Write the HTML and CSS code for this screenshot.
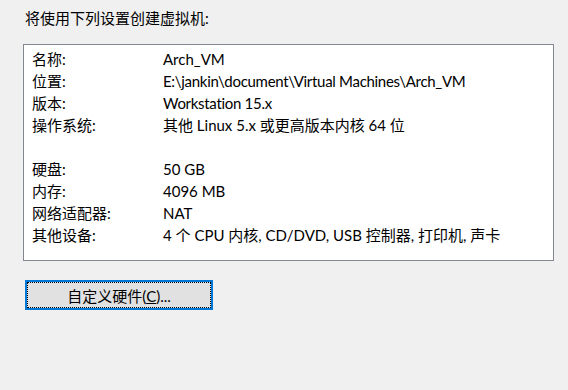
FILE: index.html
```html
<!doctype html>
<html lang="zh-CN">
  <head>
    <meta charset="utf-8">
    <title>新建虚拟机向导</title>
    <link rel="stylesheet" href="styles.css">
  </head>
  <body>
    <div class="page">
      <p class="intro">将使用下列设置创建虚拟机:</p>

      <div class="summary">
        <div class="row"><span class="key">名称:</span><span class="val">Arch_VM</span></div>
        <div class="row"><span class="key">位置:</span><span class="val tight">E:\jankin\document\Virtual Machines\Arch_VM</span></div>
        <div class="row"><span class="key">版本:</span><span class="val tight">Workstation 15.x</span></div>
        <div class="row"><span class="key">操作系统:</span><span class="val">其他 Linux 5.x 或更高版本内核 64 位</span></div>
        <div class="row blank"></div>
        <div class="row"><span class="key">硬盘:</span><span class="val">50 GB</span></div>
        <div class="row"><span class="key">内存:</span><span class="val">4096 MB</span></div>
        <div class="row"><span class="key">网络适配器:</span><span class="val">NAT</span></div>
        <div class="row"><span class="key">其他设备:</span><span class="val">4 个 CPU 内核, CD/DVD, USB 控制器, 打印机, 声卡</span></div>
      </div>

      <button class="btn" type="button">自定义硬件(<u>C</u>)...</button>
    </div>
  </body>
</html>
```

FILE: styles.css
```css
body {
  margin: 0;
  background: #f0f0f0;
  color: #000;
  font-family: Lato, "Noto Sans CJK SC", sans-serif;
  font-size: 15px;
}

.page {
  padding: 7px 15px 0 23px;
}

.intro {
  margin: 0 0 15px 2px;
  line-height: 22px;
}

.summary {
  width: 529px;
  background: #fff;
  border: 1px solid #828790;
  padding: 3px 0 14px 0;
}

.row {
  display: flex;
  height: 22px;
  line-height: 22px;
  padding-left: 8px;
  white-space: nowrap;
}

.key {
  width: 131px;
  flex: none;
}

/* latin-only values run a bit narrower in the original */
.tight {
  letter-spacing: -0.3px;
}

.btn {
  display: block;
  margin-top: 19px;
  margin-left: 2px;
  width: 188px;
  height: 30px;
  padding: 0;
  background: #e1e1e1;
  border: 2px solid #0078d7;
  outline: 1px dotted #000;
  outline-offset: -3px;
  font: inherit;
  color: #000;
}
```
